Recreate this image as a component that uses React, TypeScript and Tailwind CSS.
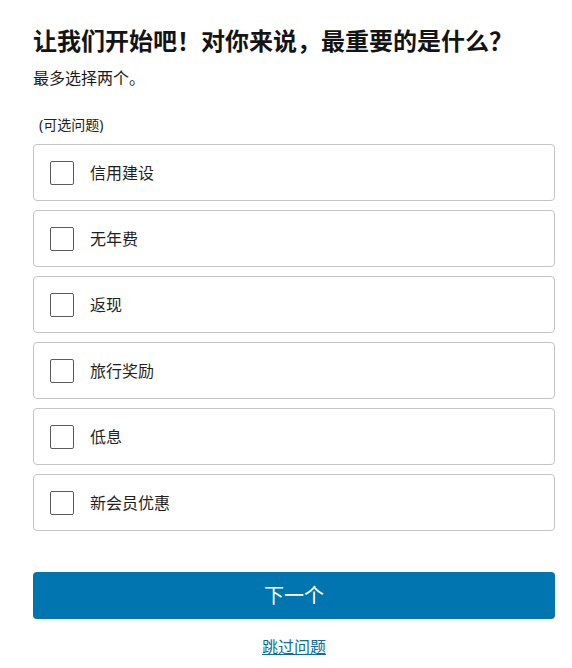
import { useState } from 'react';

const options = ['信用建设', '无年费', '返现', '旅行奖励', '低息', '新会员优惠'];

export default function App() {
  const [checked, setChecked] = useState<string[]>([]);

  const toggle = (opt: string) => {
    setChecked(prev =>
      prev.includes(opt) ? prev.filter(o => o !== opt) : prev.length < 2 ? [...prev, opt] : prev
    );
  };

  return (
    <div
      className="bg-white text-[#1a1a1a] pl-[33px] pr-[17px] pt-[25px] w-[572px]"
      style={{ fontFamily: '"Noto Sans", "Noto Sans CJK SC", sans-serif' }}
    >
      {/* Heading */}
      <h1 className="text-[24px] font-bold leading-[32px] text-[#141414]">
        让我们开始吧！对你来说，最重要的是什么？
      </h1>
      <p className="text-[16px] leading-[22px] mt-[10px]">最多选择两个。</p>

      {/* Options */}
      <div className="mt-[26px]" role="group">
        <div className="text-[14px] leading-[20px] text-[#222] pl-[6px]">(可选问题)</div>
        <div className="mt-[9px] flex flex-col gap-[9px]">
          {options.map(opt => (
            <label
              key={opt}
              className="flex items-center h-[57px] border border-[#c4c4c4] rounded-[4px] pl-[16px] cursor-pointer"
            >
              <span
                className={`w-[24px] h-[24px] border rounded-[2px] flex items-center justify-center ${
                  checked.includes(opt) ? 'bg-[#0075b0] border-[#0075b0]' : 'border-[#5a5a5a] bg-white'
                }`}
              >
                {checked.includes(opt) && (
                  <svg width="14" height="14" viewBox="0 0 14 14" fill="none">
                    <path d="M2 7l3.5 3.5L12 3.5" stroke="white" strokeWidth="2" />
                  </svg>
                )}
              </span>
              <input
                type="checkbox"
                className="sr-only"
                checked={checked.includes(opt)}
                onChange={() => toggle(opt)}
              />
              <span className="ml-[16px] text-[16px] text-[#1f1f1f]">{opt}</span>
            </label>
          ))}
        </div>
      </div>

      {/* Actions */}
      <button className="mt-[41px] w-full h-[47px] rounded-[4px] bg-[#0075b0] text-white text-[20px]">
        下一个
      </button>
      <div className="text-center mt-[16px] pb-[8px]">
        <a href="#" className="text-[16px] leading-[24px] text-[#0a6e9e] underline">
          跳过问题
        </a>
      </div>
    </div>
  );
}
